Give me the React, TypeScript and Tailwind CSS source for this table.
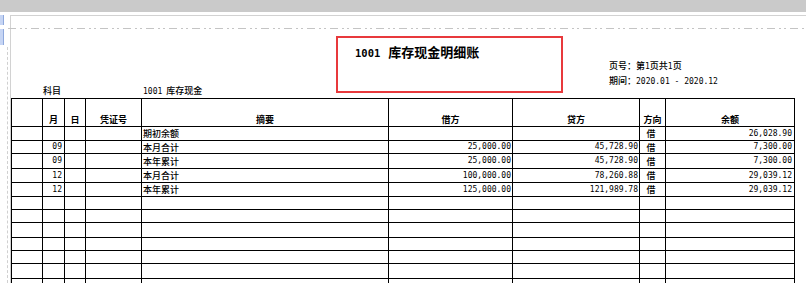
type Row = {
  m?: string;
  d?: string;
  no?: string;
  memo?: string;
  debit?: string;
  credit?: string;
  dir?: string;
  bal?: string;
};

const rows: Row[] = [
  { memo: "期初余额", dir: "借", bal: "26,028.90" },
  { m: "09", memo: "本月合计", debit: "25,000.00", credit: "45,728.90", dir: "借", bal: "7,300.00" },
  { m: "09", memo: "本年累计", debit: "25,000.00", credit: "45,728.90", dir: "借", bal: "7,300.00" },
  { m: "12", memo: "本月合计", debit: "100,000.00", credit: "78,260.88", dir: "借", bal: "29,039.12" },
  { m: "12", memo: "本年累计", debit: "125,000.00", credit: "121,989.78", dir: "借", bal: "29,039.12" },
  {}, {}, {}, {}, {}, {}, {}, {},
];

const headers = ["", "月", "日", "凭证号", "摘要", "借方", "贷方", "方向", "余额"];

const cjk = "font-['Noto_Sans_CJK_SC',sans-serif]";
const mono = "font-['DejaVu_Sans_Mono','Liberation_Mono',monospace]";

function NumCell({ v, pad }: { v?: string; pad: string }) {
  return (
    <div className={`bg-white flex items-center justify-end text-[8px] leading-none text-black ${mono} ${pad}`}>
      {v}
    </div>
  );
}

export default function App() {
  return (
    <div className={`w-[806px] h-[283px] overflow-hidden bg-white flex flex-col text-black ${cjk}`}>
      {/* window top bar */}
      <div className="h-[12px] shrink-0 bg-[#cacaca]" />

      <div className="flex flex-1 min-h-0">
        {/* left side strip */}
        <div className="w-[10px] shrink-0 flex flex-col">
          <div className="h-[3px]" />
          <div className="h-[10px] w-[4px] bg-[#c6d5f4] border-r border-[#8fa9dd]" />
          <div className="h-[4px]" />
          <div className="h-[16px] w-[4px] bg-[#c6d5f4] border-r border-[#8fa9dd]" />
          <div className="flex-1 ml-[7px] mt-[2px] border-l border-dashed border-[#d0d0d0]" />
        </div>

        {/* page */}
        <div className="flex-1 min-w-0 flex flex-col mt-[3px] border-t border-l border-[#d2d2d2]">
          <div className="h-[12px] shrink-0" />
          <div className="h-px shrink-0 -ml-[3px] bg-[repeating-linear-gradient(90deg,#c4c4c4_0_8px,transparent_8px_12px,#c4c4c4_12px_14px,transparent_14px_17px,#c4c4c4_17px_19px,transparent_19px_23px)]" />

          {/* report header */}
          <div className="flex h-[69px] shrink-0 font-medium">
            <div className="w-[325px] self-end flex text-[9px] leading-[11px] pb-[1px]">
              <span className="w-[132px] pl-[32px]">科目</span>
              <span>
                <span className={`text-[8px] ${mono}`}>1001</span>
                <span className="ml-[4px]">库存现金</span>
              </span>
            </div>

            <div className="mt-[7px] w-[227px] h-[57px] border-2 border-[#e8393c] pl-[17px] pt-[6px]">
              <div className="flex items-baseline leading-[16px] font-bold">
                <span className={`text-[10.5px] ${mono}`}>1001</span>
                <span className="ml-[8px] text-[13px]">库存现金明细账</span>
              </div>
            </div>

            <div className="ml-[46px] mt-[30px] text-[9px] leading-[14px]">
              <div>
                页号：第<span className={`text-[8px] ${mono}`}>1</span>页共<span className={`text-[8px] ${mono}`}>1</span>页
              </div>
              <div>
                期间：<span className={`text-[8px] ${mono}`}>2020.01 - 2020.12</span>
              </div>
            </div>
          </div>

          {/* ledger table */}
          <div className="w-[784px] shrink-0 grid gap-px bg-black border border-black grid-cols-[30px_21px_20px_55px_246px_123px_126px_25px_128px] grid-rows-[27px_13px_12px_14px_13px_13px_12px_12px_14px_12px_12px_14px_13px_13px]">
            {headers.map((h, i) => (
              <div key={i} className="bg-white flex items-end justify-center text-[9px] leading-[11px] font-bold pb-[1px]">
                {h}
              </div>
            ))}
            {rows.map((r, i) => (
              <div key={i} className="contents">
                <div className="bg-white" />
                <NumCell v={r.m} pad="pr-[2px]" />
                <div className="bg-white" />
                <div className="bg-white" />
                <div className="bg-white flex items-center pl-[1px] text-[9px] leading-none font-medium">{r.memo}</div>
                <NumCell v={r.debit} pad="pr-px" />
                <NumCell v={r.credit} pad="pr-px" />
                <div className="bg-white flex items-center justify-center pr-[3px] text-[9px] leading-none font-medium">{r.dir}</div>
                <NumCell v={r.bal} pad="pr-[2px]" />
              </div>
            ))}
          </div>
        </div>
      </div>
    </div>
  );
}
